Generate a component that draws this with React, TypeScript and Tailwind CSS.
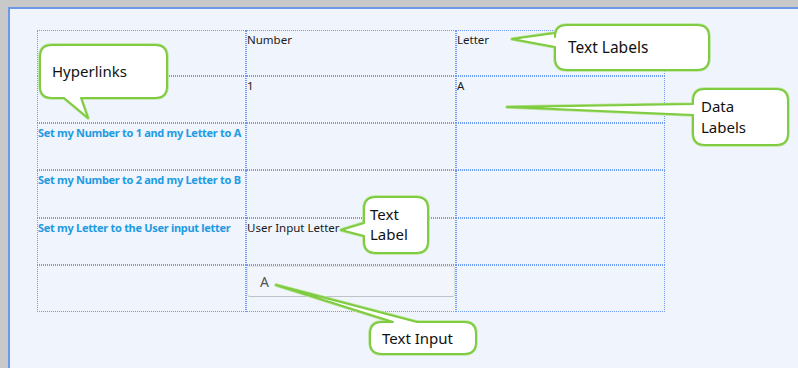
import React from "react";

const rows = [46, 47, 47, 48, 47, 47];
const cols = [209, 210, 209];

const small = "text-[11.5px] leading-[13px] text-[#1a1a1a]";
const link = "text-[11px] leading-[13px] font-bold tracking-[-0.3px] text-[#1e9be3]";

function Cell({ w, h, children }: { w: number; h: number; children?: React.ReactNode }) {
  return (
    <div
      className="border border-dotted border-[#6f9cf0] box-border pt-[2px] text-[11px] leading-[13px] overflow-visible whitespace-nowrap"
      style={{ width: w, height: h }}
    >
      {children}
    </div>
  );
}

const bubbles = [
  "M 52 45 H 155 Q 167 45 167 57 V 86 Q 167 98 155 98 H 81 L 88 118 L 64 98 H 52 Q 40 98 40 86 V 57 Q 40 45 52 45 Z",
  "M 567 25 H 697 Q 709 25 709 37 V 58 Q 709 70 697 70 H 567 Q 555 70 555 58 V 47 L 512 39 L 555 33 V 37 Q 555 25 567 25 Z",
  "M 705 89 H 776 Q 788 89 788 101 V 133 Q 788 145 776 145 H 705 Q 693 145 693 133 V 115 L 507 107 L 693 104 V 101 Q 693 89 705 89 Z",
  "M 376 197 H 416 Q 428 197 428 209 V 241 Q 428 253 416 253 H 376 Q 364 253 364 241 V 236 L 341 230 L 364 223 V 209 Q 364 197 376 197 Z",
  "M 382 322 H 393 L 276 285 L 417 322 H 464 Q 476 322 476 334 V 342 Q 476 354 464 354 H 382 Q 370 354 370 342 V 334 Q 370 322 382 322 Z",
];

export default function App() {
  const content: React.ReactNode[][] = [
    [null, <span className={small}>Number</span>, <span className={small}>Letter</span>],
    [null, <span className={small}>1</span>, <span className={small}>A</span>],
    [<span className={link}>Set my Number to 1 and my Letter to A</span>, null, null],
    [<span className={link}>Set my Number to 2 and my Letter to B</span>, null, null],
    [<span className={link}>Set my Letter to the User input letter</span>, <span className={small}>User Input Letter</span>, null],
    [
      null,
      <div className="h-[31px] mt-[-2px] rounded-[3px] border border-[#dde2ea] border-b-[#bfc3c9] bg-[#f2f5fc] pl-[12px] flex items-center">
        <span className="text-[14px] text-[#555]">A</span>
      </div>,
      null,
    ],
  ];

  return (
    <div
      className="relative w-[798px] h-[368px] overflow-hidden bg-[#c9c9c9]"
      style={{ fontFamily: "'Noto Sans', 'Open Sans', sans-serif" }}
    >
      <div className="ml-[8px] mt-[7px] h-[361px] border-l-2 border-t-2 border-[#6b98e8] bg-[#f0f4fd] pl-[27px] pt-[21px]">
        <div className="flex flex-col">
          {rows.map((h, r) => (
            <div key={r} className="flex">
              {cols.map((w, c) => (
                <Cell key={c} w={w} h={h}>
                  {content[r][c]}
                </Cell>
              ))}
            </div>
          ))}
        </div>
      </div>

      <div className="absolute inset-0 pointer-events-none">
        <svg width="798" height="368" className="absolute left-0 top-0">
          {bubbles.map((d, i) => (
            <g key={i}>
              <path d={d} fill="white" stroke="#b9e496" strokeWidth="3.5" strokeLinejoin="round" />
              <path d={d} fill="white" stroke="#7fcb42" strokeWidth="2" strokeLinejoin="round" />
            </g>
          ))}
        </svg>
        <div className="absolute left-[52px] top-[61px] text-[15px] leading-[20px] text-[#111]">Hyperlinks</div>
        <div className="absolute left-[568px] top-[37px] text-[15.5px] leading-[20px] text-[#111]">Text Labels</div>
        <div className="absolute left-[701px] top-[96px] text-[15px] leading-[21px] text-[#111]">
          Data
          <br />
          Labels
        </div>
        <div className="absolute left-[370px] top-[204px] text-[15px] leading-[20px] text-[#111]">
          Text
          <br />
          Label
        </div>
        <div className="absolute left-[382px] top-[328px] text-[15px] leading-[20px] text-[#111]">Text Input</div>
      </div>
    </div>
  );
}
